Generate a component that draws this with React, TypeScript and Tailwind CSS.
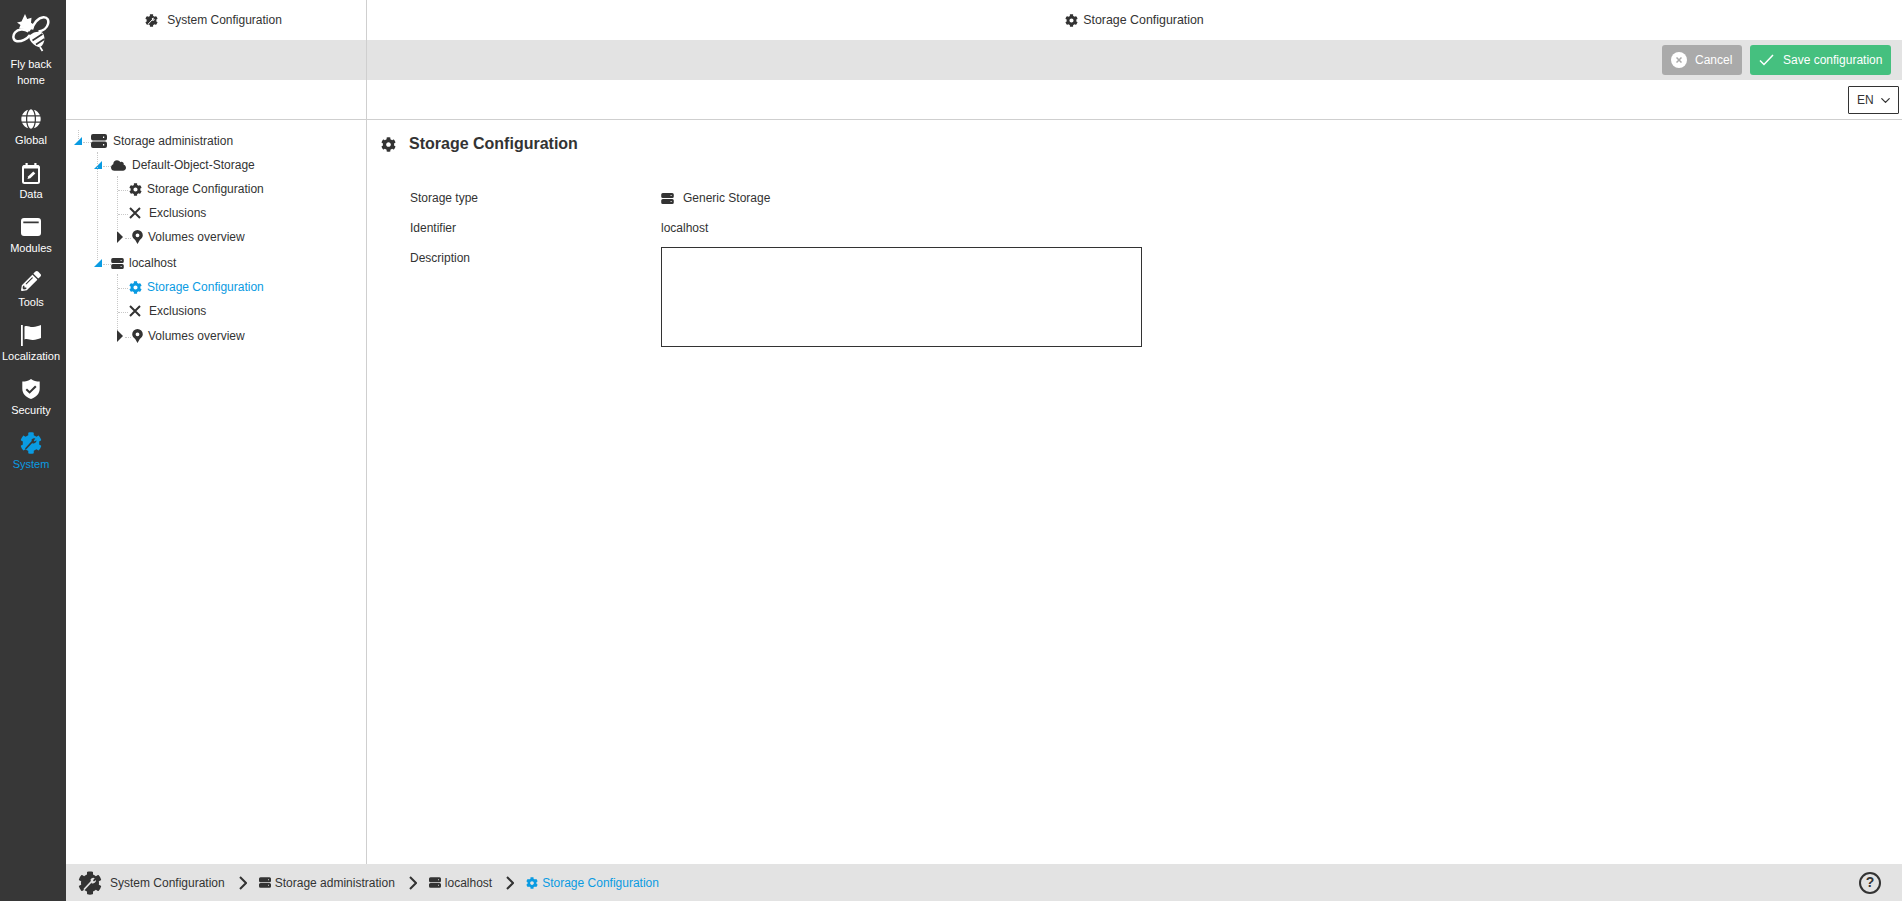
import React from 'react';
import { FaCloud, FaCog, FaGlobe, FaPencilAlt } from 'react-icons/fa';
import { FiChevronDown } from 'react-icons/fi';

function Bee() {
  return (
    <svg width="38" height="38" viewBox="0 0 38 38" fill="none" stroke="white" strokeWidth="2.500" strokeLinejoin="round">
      <path d="M13 0l2.200 5 4.300-1.200-.5 5 3.500 2.200-3 3.500-2 3-5.500-2.500L7 14.500 8.500 11 5 8.500l4.500-1z" fill="white" stroke="none" />
      <path d="M20 15.500C21 10 26 3.500 31.500 3.200 35.500 3 37 6.500 36 10c-1 4-5 7-9.500 7.500" />
      <path d="M16.500 17.500C12 14.500 6 15 3 18.500.2 22 1.200 26.800 5 27.300c4.500.5 10-2 13-6.300" />
      <path d="M18 21c3-2.800 7.500-4 11-3 3 1 4 5.500 3 9.500-1 3.500-3 6-5.500 5.500-3.500-1-7-4-8.500-7-1-2-1-3.500 0-5z" fill="white" stroke="none" />
      <path d="M20.500 26.500l10-6.500M24 30.500l8.500-5.500" stroke="#373737" strokeWidth="1.700" />
      <path d="M28 33l2.500 4" strokeWidth="1.800" />
    </svg>
  );
}

function SystemGear({ size, color, wrench }: { size: number; color: string; wrench: string }) {
  return (
    <span className="relative inline-flex items-center justify-center shrink-0" style={{ width: size, height: size }}>
      <FaCog size={size} color={color} />
      <svg className="absolute inset-0" width={size} height={size} viewBox="0 0 24 24" fill="none">
        <circle cx="12" cy="12" r="5" fill={color} />
        <path d="M6.500 18L13.500 10.500" stroke={wrench} strokeWidth="1.800" strokeLinecap="round" />
        <path d="M12.500 8.500a3.400 3.400 0 0 1 4.300-1.300l-1.800 2 .9 1.200 2.100-1.500a3.400 3.400 0 0 1-4.500 3.400z" fill={wrench} />
      </svg>
    </span>
  );
}

function ServerIcon({ w, h }: { w: number; h: number }) {
  return (
    <svg width={w} height={h} viewBox="0 0 16 14" className="shrink-0">
      <path
        fillRule="evenodd"
        clipRule="evenodd"
        d="M2 0h12a2 2 0 0 1 2 2v2.500a2 2 0 0 1-2 2H2a2 2 0 0 1-2-2V2a2 2 0 0 1 2-2zm10 2.600v1.300h1.200V2.600zM2 7.500h12a2 2 0 0 1 2 2V12a2 2 0 0 1-2 2H2a2 2 0 0 1-2-2V9.500a2 2 0 0 1 2-2zm10 2.600v1.300h1.200v-1.300z"
        fill="currentColor"
      />
    </svg>
  );
}

function XIcon() {
  return (
    <svg width="12" height="12" viewBox="0 0 12 12" className="shrink-0" fill="none" stroke="currentColor" strokeWidth="2">
      <path d="M1 1l10 10M11 1L1 11" />
    </svg>
  );
}

function DataIcon() {
  return (
    <svg width="18" height="21" viewBox="0 0 18 21" fill="none">
      <rect x="1" y="3" width="16" height="17" rx="1.500" stroke="white" strokeWidth="2" />
      <rect x="1" y="2.500" width="16" height="3" fill="white" />
      <rect x="3.500" y="0" width="2.200" height="4" fill="white" />
      <rect x="12.300" y="0" width="2.200" height="4" fill="white" />
      <path d="M5.500 16l.8-2.800 5-4.700 2 2-5 4.700z" fill="white" />
    </svg>
  );
}

function ModulesIcon() {
  return (
    <svg width="20" height="18" viewBox="0 0 20 18">
      <path fillRule="evenodd" clipRule="evenodd" d="M3 0h14a3 3 0 0 1 3 3v12a3 3 0 0 1-3 3H3a3 3 0 0 1-3-3V3a3 3 0 0 1 3-3zM2.300 3.500v1.700h15.400V3.500z" fill="white" />
    </svg>
  );
}

function FlagIcon() {
  return (
    <svg width="20" height="21" viewBox="0 0 20 21" fill="white">
      <rect x="0" y="0" width="1.800" height="21" />
      <path d="M3.500 1.500c3-1.500 5.500 1 8.500.5 3-.3 5-1 8-2v13c-3 1-5 1.800-8 2-3 .3-5.500-1.800-8.500-.5z" />
    </svg>
  );
}

function ShieldIcon() {
  return (
    <svg width="18" height="20" viewBox="0 0 20 23">
      <path fillRule="evenodd" clipRule="evenodd" d="M10 0c3 2 6 3 10 3v8c0 6-4 10-10 12C4 21 0 17 0 11V3c4 0 7-1 10-3zM5.400 11l-1.600 1.700 4.600 4.400 8-8-1.700-1.700-6.300 6.300z" fill="white" />
    </svg>
  );
}

function PinIcon() {
  return (
    <svg width="11" height="14" viewBox="0 0 11 14" className="shrink-0">
      <path fillRule="evenodd" clipRule="evenodd" d="M5.500 0a5.300 5.300 0 0 1 5.300 5.300c0 2.200-1.500 3.700-3 4.700L5.500 14 3.200 10C1.700 9 .2 7.500.2 5.300A5.300 5.300 0 0 1 5.500 0zm0 3.400a1.900 1.900 0 1 0 0 3.800 1.900 1.900 0 0 0 0-3.800z" fill="#333333" />
    </svg>
  );
}

function Nav({ icon, label, active }: { icon: React.ReactNode; label: string; active?: boolean }) {
  return (
    <div className={`h-[54px] flex flex-col items-center ${active ? 'text-[#0a9be2]' : 'text-white'}`}>
      <div className="h-[30px] pt-[2px] flex items-center justify-center">{icon}</div>
      <div className="text-[11px] leading-[14px] whitespace-nowrap">{label}</div>
    </div>
  );
}

function Open() {
  return <span className="shrink-0 w-0 h-0 border-l-[8px] border-l-transparent border-b-[8px] border-b-[#0a9be2]" />;
}

function Closed() {
  return <span className="shrink-0 w-0 h-0 border-l-[6px] border-l-[#333333] border-y-[6px] border-y-transparent" />;
}

function Row({ pad, blue, children }: { pad: string; blue?: boolean; children: React.ReactNode }) {
  return <div className={`flex items-center h-[24px] ${pad} ${blue ? 'text-[#0a9be2]' : 'text-[#333333]'}`}>{children}</div>;
}

function Branch({ name, icon, blue, textGap, lastPad = '' }: { name: string; icon: React.ReactNode; blue?: boolean; textGap: string; lastPad?: string }) {
  return (
    <>
      <Row pad="pl-[94px]">
        <Open />
        <span className="w-[9px] shrink-0" />
        {icon}
        <span className={textGap}>{name}</span>
      </Row>
      <Row pad="pl-[129px]" blue={blue}>
        <FaCog size={13} />
        <span className="ml-[5px]">Storage Configuration</span>
      </Row>
      <Row pad="pl-[129px]">
        <XIcon />
        <span className="ml-[8px]">Exclusions</span>
      </Row>
      <Row pad={`pl-[117px] ${lastPad}`}>
        <Closed />
        <span className="w-[9px] shrink-0" />
        <PinIcon />
        <span className="ml-[5px]">Volumes overview</span>
      </Row>
    </>
  );
}

function Dots({ className }: { className: string }) {
  return <div className={`absolute border-[#c8c8c8] border-dotted ${className}`} />;
}

function Chevron() {
  return (
    <svg width="8" height="14" viewBox="0 0 8 14" fill="none" stroke="#333333" strokeWidth="2" className="ml-[14px] mr-[12px] shrink-0">
      <path d="M1 1l6 6-6 6" />
    </svg>
  );
}

function Crumb({ icon, label, blue }: { icon: React.ReactNode; label: string; blue?: boolean }) {
  return (
    <div className={`flex items-center gap-[4px] ${blue ? 'text-[#0a9be2]' : 'text-[#333333]'}`}>
      {icon}
      <span>{label}</span>
    </div>
  );
}

export default function App() {
  return (
    <div className="flex h-[901px] w-full overflow-hidden bg-white text-[12px] text-[#333333] font-['Liberation_Sans',Arial,sans-serif]">
      <aside className="w-[66px] shrink-0 bg-[#373737] pr-[4px] flex flex-col items-center">
        <div className="h-[103px] flex flex-col items-center pt-[14px] text-white">
          <Bee />
          <div className="text-[11px] leading-[15.500px] mt-[5px] text-center">Fly back<br />home</div>
        </div>
        <Nav icon={<FaGlobe size={20} />} label="Global" />
        <Nav icon={<DataIcon />} label="Data" />
        <Nav icon={<ModulesIcon />} label="Modules" />
        <Nav icon={<FaPencilAlt size={20} />} label="Tools" />
        <Nav icon={<FlagIcon />} label="Localization" />
        <Nav icon={<ShieldIcon />} label="Security" />
        <Nav icon={<SystemGear size={22} color="#0a9be2" wrench="#373737" />} label="System" active />
      </aside>

      <div className="flex-1 min-w-0 flex flex-col">
        <div className="flex-1 min-h-0 flex">
          <section className="w-[301px] shrink-0 border-r border-[#cfcfcf] flex flex-col">
            <div className="h-[40px] flex items-center justify-center gap-[9px] pr-[5px] shrink-0">
              <SystemGear size={13} color="#333333" wrench="white" />
              <span>System Configuration</span>
            </div>
            <div className="h-[40px] bg-[#e3e3e3] shrink-0" />
            <div className="h-[40px] border-b border-[#cfcfcf] shrink-0" />
            <div className="relative flex-1 -ml-[66px] pt-[9px]">
              <Dots className="left-[78px] top-[10px] h-[9px] border-l" />
              <Dots className="left-[83px] top-[22px] w-[8px] border-t" />
              <Dots className="left-[97px] top-[32px] h-[108px] border-l" />
              <Dots className="left-[103px] top-[46px] w-[8px] border-t" />
              <Dots className="left-[117px] top-[56px] h-[56px] border-l" />
              <Dots className="left-[118px] top-[70px] w-[10px] border-t" />
              <Dots className="left-[118px] top-[94px] w-[10px] border-t" />
              <Dots className="left-[125px] top-[118px] w-[6px] border-t" />
              <Dots className="left-[103px] top-[144px] w-[8px] border-t" />
              <Dots className="left-[117px] top-[154px] h-[56px] border-l" />
              <Dots className="left-[118px] top-[168px] w-[10px] border-t" />
              <Dots className="left-[118px] top-[192px] w-[10px] border-t" />
              <Dots className="left-[125px] top-[217px] w-[6px] border-t" />
              <Row pad="pl-[74px]">
                <Open />
                <span className="w-[9px] shrink-0" />
                <ServerIcon w={16} h={14} />
                <span className="ml-[6px]">Storage administration</span>
              </Row>
              <Branch name="Default-Object-Storage" icon={<FaCloud size={15} />} textGap="ml-[6px]" />
              <div className="mt-[2px]">
                <Branch name="localhost" icon={<ServerIcon w={13} h={11} />} textGap="ml-[5px]" lastPad="mt-[1px]" blue />
              </div>
            </div>
          </section>

          <main className="flex-1 min-w-0 flex flex-col">
            <div className="h-[40px] flex items-center justify-center gap-[5px] shrink-0 text-[12.4px]">
              <FaCog size={13} />
              <span>Storage Configuration</span>
            </div>
            <div className="h-[40px] bg-[#e3e3e3] shrink-0 flex items-center justify-end gap-[8px] pr-[11px]">
              <button className="h-[30px] w-[80px] bg-[#aaaaaa] rounded-[3px] text-white flex items-center pl-[9px] gap-[8px]">
                <span className="w-[16px] h-[16px] rounded-full bg-white flex items-center justify-center">
                  <svg width="6" height="6" viewBox="0 0 6 6" stroke="#aaaaaa" strokeWidth="1.500">
                    <path d="M.5.5l5 5M5.500.5l-5 5" />
                  </svg>
                </span>
                Cancel
              </button>
              <button className="h-[30px] w-[141px] bg-[#45c07f] rounded-[3px] text-white flex items-center pl-[9px] gap-[9px]">
                <svg width="15" height="12" viewBox="0 0 15 12" fill="none" stroke="white" strokeWidth="1.500">
                  <path d="M1 6.500l4 4L14 1" />
                </svg>
                Save configuration
              </button>
            </div>
            <div className="h-[40px] border-b border-[#cfcfcf] shrink-0 pt-[1px] flex items-center justify-end pr-[3px]">
              <div className="h-[28px] w-[51px] border border-[#333333] rounded-[1px] flex items-center pl-[8px] gap-[4px]">
                EN <FiChevronDown size={15} />
              </div>
            </div>
            <div className="pl-[14px] pt-[14px]">
              <div className="flex items-center h-[20px] text-[16px] font-bold">
                <FaCog size={15} />
                <span className="ml-[13px]">Storage Configuration</span>
              </div>
              <dl className="mt-[29px] pl-[29px] grid grid-cols-[251px_481px] auto-rows-[30px] items-center">
                <dt>Storage type</dt>
                <dd className="flex items-center gap-[9px]">
                  <ServerIcon w={13} h={11} />
                  Generic Storage
                </dd>
                <dt>Identifier</dt>
                <dd>localhost</dd>
                <dt className="self-start mt-[6px]">Description</dt>
                <dd className="self-start mt-[4px]">
                  <textarea className="block w-[481px] h-[100px] border border-[#333333] bg-white resize-none" />
                </dd>
              </dl>
            </div>
          </main>
        </div>

        <footer className="h-[37px] shrink-0 bg-[#e3e3e3] flex items-center pl-[12px] pr-[21px]">
          <SystemGear size={24} color="#333333" wrench="#e3e3e3" />
          <span className="ml-[8px]">System Configuration</span>
          <Chevron />
          <Crumb icon={<ServerIcon w={12} h={11} />} label="Storage administration" />
          <Chevron />
          <Crumb icon={<ServerIcon w={12} h={11} />} label="localhost" />
          <Chevron />
          <Crumb icon={<FaCog size={12} />} label="Storage Configuration" blue />
          <span className="ml-auto w-[22px] h-[22px] rounded-full border-2 border-[#333333] flex items-center justify-center text-[14px] font-bold">?</span>
        </footer>
      </div>
    </div>
  );
}
